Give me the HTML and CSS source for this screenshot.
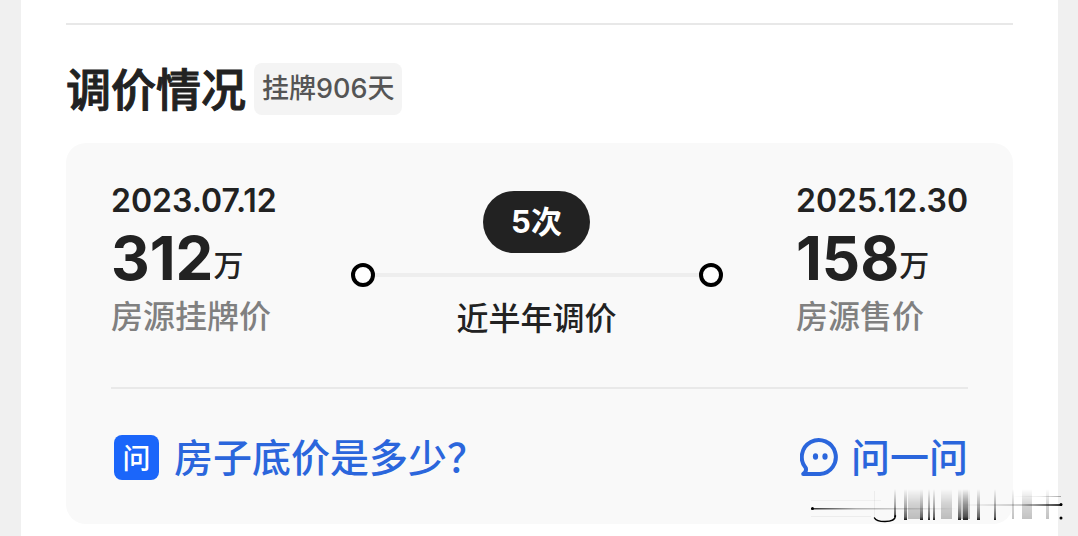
FILE: index.html
```html
<!DOCTYPE html>
<html lang="zh-CN">
<head>
<meta charset="utf-8">
<meta name="viewport" content="width=device-width, initial-scale=1">
<title>调价情况</title>
<link rel="stylesheet" href="styles.css">
</head>
<body>
<main class="page">
  <section class="section">
    <header class="heading">
      <h1 class="title">调价情况</h1>
      <span class="tag">挂牌906天</span>
    </header>
    <div class="card">
      <div class="summary">
        <div class="price">
          <time class="date" datetime="2023-07-12">2023.07.12</time>
          <p class="amount"><span class="number">312</span><span class="unit">万</span></p>
          <p class="label">房源挂牌价</p>
        </div>
        <div class="timeline">
          <span class="count">5次</span>
          <div class="track"><span class="dot"></span><span class="line"></span><span class="dot"></span></div>
          <p class="caption">近半年调价</p>
        </div>
        <div class="price price-end">
          <time class="date" datetime="2025-12-30">2025.12.30</time>
          <p class="amount"><span class="number">158</span><span class="unit">万</span></p>
          <p class="label">房源售价</p>
        </div>
      </div>
      <div class="ask">
        <a class="question" href="#"><span class="badge">问</span><span class="ask-text">房子底价是多少？</span></a>
        <button class="ask-button" type="button">
          <svg class="bubble" viewBox="0 0 40 40" aria-hidden="true">
            <path d="M20 37H3.200q3.600-2.400 2.600-6A17 17 0 1 1 20 37Z" fill="none" stroke="#2b66dc" stroke-width="4" stroke-linejoin="round"/>
            <ellipse cx="15.500" cy="19.500" rx="2.600" ry="3.200" fill="#2b66dc"/>
            <ellipse cx="25" cy="19.500" rx="2.600" ry="3.200" fill="#2b66dc"/>
          </svg><span class="ask-text">问一问</span></button>
      </div>
    </div>
  </section>
  <svg class="smear" viewBox="0 0 256 40" aria-hidden="true">
    <defs>
      <linearGradient id="down" x1="0" y1="0" x2="0" y2="1"><stop offset="0" stop-color="#000" stop-opacity="0"/><stop offset=".6" stop-color="#000" stop-opacity=".35"/><stop offset=".9" stop-color="#000" stop-opacity=".6"/><stop offset="1" stop-color="#000" stop-opacity=".9"/></linearGradient>
      <linearGradient id="soft" x1="0" y1="0" x2="0" y2="1"><stop offset="0" stop-color="#000" stop-opacity="0"/><stop offset=".5" stop-color="#000" stop-opacity=".16"/><stop offset="1" stop-color="#000" stop-opacity=".24"/></linearGradient>
      <linearGradient id="left"><stop offset="0" stop-color="#000" stop-opacity=".8"/><stop offset=".3" stop-color="#000" stop-opacity=".3"/><stop offset="1" stop-color="#000" stop-opacity="0"/></linearGradient>
      <linearGradient id="right"><stop offset="0" stop-color="#000" stop-opacity="0"/><stop offset=".6" stop-color="#000" stop-opacity=".2"/><stop offset="1" stop-color="#000" stop-opacity=".8"/></linearGradient>
      <filter id="blur" x="-5%" y="-5%" width="110%" height="110%"><feGaussianBlur stdDeviation=".7 0"/></filter>
    </defs>
    <g fill="url(#soft)" filter="url(#blur)">
      <rect x="97" y="3" width="12" height="30"/><rect x="130" y="3" width="11" height="30"/><rect x="150" y="3" width="9" height="30"/><rect x="201" y="3" width="2" height="30"/><rect x="211" y="3" width="10" height="30"/><rect x="235" y="3" width="3" height="30"/>
    </g>
    <g fill="url(#down)" filter="url(#blur)">
      <rect x="83" y="3" width="2" height="28"/><rect x="93" y="3" width="3" height="31"/><rect x="109" y="3" width="3" height="31"/><rect x="117" y="3" width="2" height="31"/><rect x="122" y="3" width="2" height="31"/><rect x="147" y="3" width="3" height="31"/><rect x="152" y="3" width="5" height="31"/><rect x="166" y="3" width="3" height="31"/><rect x="183" y="3" width="2" height="31"/>
    </g>
    <path d="M84.500 30C84 35 79 35.500 74 35.500S65 35 63.500 32" fill="none" stroke="#000" stroke-width="1.500" stroke-linecap="round"/>
    <rect x="63" y="5" width="1" height="27" fill="#000" opacity=".05"/>
    <rect x="0" y="22" width="150" height="1.500" fill="url(#left)"/>
    <rect x="0" y="14" width="70" height="1" fill="#000" opacity=".04"/><rect x="0" y="30" width="60" height="1" fill="#000" opacity=".05"/>
    <circle cx="1.500" cy="22.500" r="1.500"/>
    <rect x="150" y="18" width="101" height="2" fill="url(#right)"/>
    <rect x="200" y="10" width="50" height="1" fill="url(#right)" opacity=".4"/>
    <circle cx="250" cy="18.500" r="1.500"/><circle cx="250" cy="32" r="1.500"/>
  </svg>
</main>
</body>
</html>
```
FILE: styles.css
```css
* { box-sizing: border-box; }

body {
  margin: 0;
  background: #f0f0f0;
  color: #222;
  font-family: Inter, "Noto Sans CJK SC", sans-serif;
  font-weight: 500;
}

h1, p { margin: 0; }

.page {
  position: relative;
  min-height: 100vh;
  margin: 0 20px 0 21px;
  padding: 23px 45px 13px;
  background: #fff;
}

.section { border-top: 2px solid #e8e8e8; }

.heading {
  display: flex;
  align-items: center;
  gap: 8px;
  padding: 38px 0 28px;
}

.title {
  padding-top: 4px;
  font-size: 45px;
  font-weight: 500;
  line-height: 48px;
  -webkit-text-stroke: 1px;
}

.tag {
  padding: 0 8px;
  border-radius: 8px;
  background: #f4f4f4;
  color: #555;
  font-size: 27px;
  font-weight: 500;
  line-height: 52px;
}

.card {
  padding: 40px 45px 43px;
  border-radius: 20px;
  background: #f9f9f9;
}

.summary {
  display: flex;
  justify-content: space-between;
  padding-bottom: 48px;
  border-bottom: 2px solid #e9e9e9;
}

.price { width: 166px; white-space: nowrap; }

.price-end { width: 172px; }

.date {
  display: block;
  font-size: 32px;
  font-weight: 600;
  line-height: 36px;
}

.amount {
  height: 78px;
  line-height: 78px;
}

.number {
  font-size: 60px;
  font-weight: 700;
}

.unit {
  font-size: 30px;
  line-height: 40px;
  vertical-align: 4px;
}

.label {
  color: #808080;
  font-size: 32px;
  line-height: 40px;
}

.timeline {
  display: flex;
  flex-direction: column;
  align-items: center;
  width: 372px;
  padding-top: 8px;
}

.count {
  padding: 0 28px;
  border-radius: 31px;
  background: #222;
  color: #fff;
  font-size: 31px;
  font-weight: 700;
  line-height: 62px;
}

.track {
  display: flex;
  align-items: center;
  width: 100%;
  margin-top: 10px;
}

.dot {
  width: 24px;
  height: 24px;
  border: 4px solid #000;
  border-radius: 50%;
  background: #fff;
}

.line {
  flex: 1;
  height: 4px;
  background: #eee;
}

.caption {
  margin-top: 12px;
  font-size: 32px;
  line-height: 40px;
}

.ask {
  display: flex;
  align-items: center;
  justify-content: space-between;
  padding-top: 44px;
}

.question, .ask-button {
  display: flex;
  align-items: center;
  color: #2b66dc;
  font-family: "Noto Sans CJK SC", sans-serif;
  font-size: 39px;
  font-weight: 500;
  text-decoration: none;
}

.question { gap: 15px; margin-left: 3px; }

.ask-text {
  padding-bottom: 4px;
  line-height: 44px;
}

.badge {
  width: 45px;
  border-radius: 8px;
  background: #1b66fa;
  color: #fff;
  font-size: 28px;
  line-height: 45px;
  text-align: center;
}

.ask-button {
  gap: 11px;
  padding: 0;
  border: 0;
  background: none;
}

.bubble { width: 40px; height: 40px; }

.smear {
  position: absolute;
  right: -9px;
  bottom: 11px;
  width: 256px;
  height: 40px;
}
```
